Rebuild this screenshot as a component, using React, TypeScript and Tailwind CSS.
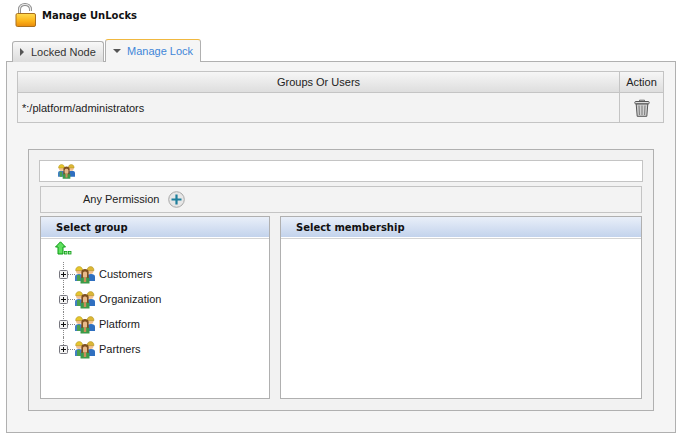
const font = 'font-["Liberation_Sans",sans-serif]';
const boldFont = 'font-["DejaVu_Sans",sans-serif]';

// orange padlock, open shackle
function LockIcon() {
  return (
    <svg width="22" height="24" viewBox="0 0 22 24" className="shrink-0">
      <defs>
        <linearGradient id="lockBody" x1="0" y1="0" x2="0" y2="1">
          <stop offset="0" stopColor="#ffdc50" />
          <stop offset="0.6" stopColor="#fbb117" />
          <stop offset="1" stopColor="#e98a0c" />
        </linearGradient>
      </defs>
      <path d="M4.5 11V6.5C4.5 3 7.2 1.5 10 1.5S15.5 3 15.5 6.5V8" fill="none" stroke="#8c8c8c" strokeWidth="3" />
      <path d="M4.5 11V6.5C4.5 3 7.2 1.5 10 1.5S15.5 3 15.5 6.5V8" fill="none" stroke="#ececec" strokeWidth="1.2" />
      <rect x="1" y="10.5" width="19.5" height="13" rx="1.5" fill="url(#lockBody)" stroke="#a9701f" />
    </svg>
  );
}

// three people group icon: two hard hats behind, one long haired figure in front
function GroupIcon({ size = 20 }: { size?: number }) {
  return (
    <svg width={size} height={size * 0.9} viewBox="0 0 20 18" className="shrink-0">
      <path d="M0 15V10.5C0 9 1.5 8 4 8S8 9 8 10.5V15Z" fill="#3f7fc4" />
      <path d="M2 15V9H5V15Z" fill="#4aa04f" />
      <circle cx="4" cy="5" r="3" fill="#f0c090" />
      <path d="M.6 4.6C.8 1.6 2.4.6 4.2.6S7.6 1.8 7.6 4.6Z" fill="#e6c62c" stroke="#a88d1a" strokeWidth=".5" />
      <path d="M12 15V10.5C12 9 13.5 8 16 8S20 9 20 10.5V15Z" fill="#2f6fc0" />
      <circle cx="15.5" cy="5" r="3" fill="#f0c090" />
      <path d="M12 4.6C12.2 1.6 13.8.6 15.6.6S19 1.8 19 4.6Z" fill="#dcb636" stroke="#a88d1a" strokeWidth=".5" />
      <path d="M5.5 17.5V12.5C5.5 11 7.5 10.5 10 10.5S14.5 11 14.5 12.5V17.5Z" fill="#3b9a48" />
      <path d="M6.3 12V6.5C6.3 3.8 8 3 10 3S13.7 3.8 13.7 6.5V12H12V7H8V12Z" fill="#7d4f1e" />
      <rect x="8" y="5.5" width="4" height="6" rx="1.6" fill="#e8b98a" />
      <rect x="8.8" y="11" width="2.4" height="5" fill="#c98f5c" />
    </svg>
  );
}

function TrashIcon() {
  return (
    <svg width="16" height="18" viewBox="0 0 16 18">
      <path d="M5.5 2.5V1.2H10.5V2.5" fill="none" stroke="#666" />
      <rect x="0.8" y="2.5" width="14.4" height="2.4" rx="1" fill="#ddd" stroke="#555" />
      <path d="M2.2 5H13.8L12.8 17.3H3.2Z" fill="#d0d0d0" stroke="#555" />
      <path d="M5 6.5L5.4 16M8 6.5V16M11 6.5L10.6 16" stroke="#777" />
    </svg>
  );
}

function PlusCircle() {
  return (
    <svg width="17" height="17" viewBox="0 0 17 17">
      <circle cx="8.5" cy="8.5" r="7.8" fill="#e6e6e6" stroke="#a8a8a8" />
      <path d="M8.5 3.5V13.5M3.5 8.5H13.5" stroke="#1f7f9c" strokeWidth="2.2" />
    </svg>
  );
}

function UpArrow() {
  return (
    <svg width="17" height="14" viewBox="0 0 17 14">
      <path d="M5.5 .8L10.5 6H8V13H3V6H.5Z" fill="#5fe05f" stroke="#0d9a14" />
      <rect x="9.5" y="10.5" width="2.5" height="2.5" fill="#9df09d" stroke="#0d9a14" strokeWidth=".8" />
      <rect x="13.5" y="10.5" width="2.5" height="2.5" fill="#9df09d" stroke="#0d9a14" strokeWidth=".8" />
    </svg>
  );
}

function Expander() {
  return (
    <svg width="9" height="9" viewBox="0 0 9 9" className="shrink-0">
      <rect x=".5" y=".5" width="8" height="8" rx="1" fill="#f4f4f4" stroke="#77777f" />
      <path d="M2 4.5H7M4.5 2V7" stroke="#111" />
    </svg>
  );
}

function TreeRow({ label, last }: { label: string; last?: boolean }) {
  return (
    <div className="relative flex h-[25px] items-center pl-[18px]">
      {/* dotted tree lines */}
      <div className={`absolute left-[22px] top-0 border-l border-dotted border-[#888] ${last ? 'h-3' : 'h-[25px]'}`} />
      <div className="relative flex items-center">
        <Expander />
        <div className="w-[7px] border-t border-dotted border-[#888]" />
        <GroupIcon />
        <span className="ml-[4px] text-[11px] text-[#1a1a1a]">{label}</span>
      </div>
    </div>
  );
}

function PanelHead({ title }: { title: string }) {
  return (
    <div className={`flex h-[20px] items-center bg-gradient-to-b from-[#e9eff9] to-[#c3d3ec] pl-[15px] text-[10px] font-bold text-[#111] shadow-[0_1px_0_#ffffff,0_2px_0_#d4d4d4] ${boldFont}`}>
      {title}
    </div>
  );
}

export default function App() {
  return (
    <div className={`h-[436px] w-[678px] overflow-hidden bg-white ${font}`}>
      {/* Title */}
      <div className="flex h-[38px] items-start pl-[15px] pt-[3px]">
        <LockIcon />
        <span className={`ml-[5px] mt-[5px] text-[10px] font-bold text-[#111] ${boldFont}`}>Manage UnLocks</span>
      </div>

      {/* Tabs */}
      <div className="relative z-10 flex h-[24px] items-end gap-[1px] pl-[12px]">
        <div className="flex h-[21px] w-[92px] items-center gap-[7px] rounded-t-[3px] border border-b-0 border-[#b0b0b0] bg-gradient-to-b from-[#f8f8f8] to-[#dcdcdc] pl-[7px] text-[11px] text-[#333]">
          <span className="h-0 w-0 border-y-[4px] border-l-[4px] border-y-transparent border-l-[#555]" />
          Locked Node
        </div>
        <div className="flex h-[23px] w-[96px] items-center gap-[6px] rounded-t-[3px] border border-b-0 border-[#b0b0b0] border-t-[#f0b840] bg-[#f5f5f5] pl-[7px] text-[11px] text-[#3f86d8]">
          <span className="h-0 w-0 border-x-[4px] border-t-[4px] border-x-transparent border-t-[#555]" />
          Manage Lock
        </div>
      </div>

      {/* Main panel */}
      <div className="ml-[6px] mt-[-1px] h-[372px] w-[670px] border border-[#b0b0b0] bg-[#f5f5f5] px-[10px] py-[9px]">
        {/* Table */}
        <div className="w-[647px] border border-[#c4c4c4] text-[11px] text-[#222]">
          <div className="flex h-[21px] border-b border-[#c4c4c4] bg-gradient-to-b from-[#f6f6f6] to-[#dedede]">
            <div className="flex flex-1 items-center justify-center border-r border-[#c4c4c4]">Groups Or Users</div>
            <div className="flex w-[43px] items-center justify-center">Action</div>
          </div>
          <div className="flex h-[29px] bg-[#f3f3f3]">
            <div className="flex flex-1 items-center border-r border-[#c4c4c4] pl-[4px] pt-[1px]">*:/platform/administrators</div>
            <div className="flex w-[43px] items-center justify-center">
              <TrashIcon />
            </div>
          </div>
        </div>

        {/* Inner panel */}
        <div className="ml-[11px] mt-[26px] h-[262px] w-[626px] border border-[#b0b0b0] bg-[#f2f2f2] pl-[10px] pt-[10px]">
          <div className="flex h-[22px] w-[604px] items-center border border-[#c4c4c4] bg-white pl-[18px] pt-[2px]">
            <GroupIcon size={17} />
          </div>
          <div className="ml-[1px] mt-[4px] flex h-[27px] w-[602px] items-center border border-[#c4c4c4] bg-[#f3f3f3] pb-[1px] pl-[42px] text-[11px] text-[#222]">
            Any Permission
            <span className="ml-[9px] flex">
              <PlusCircle />
            </span>
          </div>
          <div className="ml-[1px] mt-[3px] flex gap-[10px]">
            <div className="h-[183px] w-[230px] border border-[#b0b0b0] bg-white">
              <PanelHead title="Select group" />
              <div className="h-[24px] pl-[14px] pt-[4px]">
                <UpArrow />
              </div>
              <div className="mt-[1px]">
                <TreeRow label="Customers" />
                <TreeRow label="Organization" />
                <TreeRow label="Platform" />
                <TreeRow label="Partners" last />
              </div>
            </div>
            <div className="h-[183px] w-[362px] border border-[#b0b0b0] bg-white">
              <PanelHead title="Select membership" />
            </div>
          </div>
        </div>
      </div>
    </div>
  );
}
